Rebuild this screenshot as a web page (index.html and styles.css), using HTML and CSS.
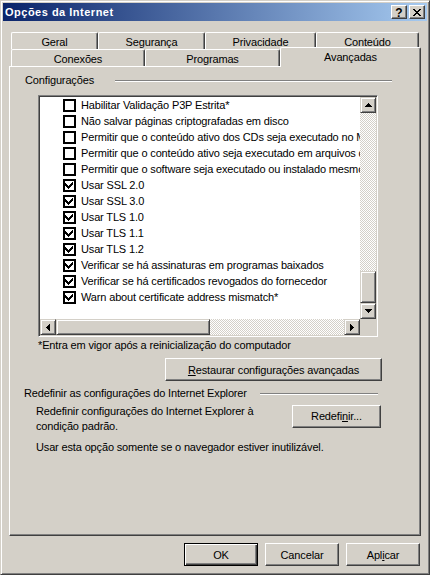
FILE: index.html
```html
<!DOCTYPE html>
<html lang="pt-BR">
<head>
    <meta charset="UTF-8">
    <meta name="viewport" content="width=device-width, initial-scale=1.0">
    <title>Opções da Internet</title>
    <link rel="stylesheet" href="styles.css">
</head>
<body>

<div class="window">
    <div class="titlebar">
        <span class="title">Opções da Internet</span>
        <div class="caption-btns">
            <span class="cap cap-help">?</span>
            <span class="cap">
                <svg width="8" height="7" viewBox="0 0 8 7" shape-rendering="crispEdges"><path d="M0 0h2l2 2.4 2-2.4h2l-3 3.5 3 3.5h-2l-2-2.4-2 2.4h-2l3-3.5z" fill="#000"/></svg>
            </span>
        </div>
    </div>

    <div class="client">
        <div class="tabs">
            <div class="tab-row">
                <div class="tab tab-geral">Geral</div>
                <div class="tab tab-seguranca">Segurança</div>
                <div class="tab tab-privacidade">Privacidade</div>
                <div class="tab tab-conteudo">Conteúdo</div>
            </div>
            <div class="tab-row">
                <div class="tab tab-conexoes">Conexões</div>
                <div class="tab tab-programas">Programas</div>
                <div class="tab tab-avancadas active">Avançadas</div>
            </div>
        </div>

        <div class="panel">
            <div class="group-head head-config">
                <span>Configurações</span>
                <span class="etch"></span>
            </div>

            <div class="listbox">
                <div class="list-rows">
                    <div class="row"><span class="check"></span>Habilitar Validação P3P Estrita*</div>
                    <div class="row"><span class="check"></span>Não salvar páginas criptografadas em disco</div>
                    <div class="row"><span class="check"></span>Permitir que o conteúdo ativo dos CDs seja executado no Meu Computador*</div>
                    <div class="row"><span class="check"></span>Permitir que o conteúdo ativo seja executado em arquivos do Meu Computador*</div>
                    <div class="row"><span class="check"></span>Permitir que o software seja executado ou instalado mesmo que a assinatura seja inválida</div>
                    <div class="row"><span class="check on"></span>Usar SSL 2.0</div>
                    <div class="row"><span class="check on"></span>Usar SSL 3.0</div>
                    <div class="row"><span class="check on"></span>Usar TLS 1.0</div>
                    <div class="row"><span class="check on"></span>Usar TLS 1.1</div>
                    <div class="row"><span class="check on"></span>Usar TLS 1.2</div>
                    <div class="row"><span class="check on"></span>Verificar se há assinaturas em programas baixados</div>
                    <div class="row"><span class="check on"></span>Verificar se há certificados revogados do fornecedor</div>
                    <div class="row"><span class="check on"></span>Warn about certificate address mismatch*</div>
                </div>

                <div class="vscroll">
                    <span class="sb-btn">
                        <svg width="7" height="4" viewBox="0 0 7 4" shape-rendering="crispEdges"><path d="M3 0h1v1h1v1h1v1h1v1h-7v-1h1v-1h1v-1h1z" fill="#000"/></svg>
                    </span>
                    <span class="sb-track"></span>
                    <span class="sb-thumb v"></span>
                    <span class="sb-btn">
                        <svg width="7" height="4" viewBox="0 0 7 4" shape-rendering="crispEdges"><path d="M0 0h7v1h-1v1h-1v1h-1v1h-1v-1h-1v-1h-1v-1h-1z" fill="#000"/></svg>
                    </span>
                </div>

                <div class="hscroll">
                    <span class="sb-btn">
                        <svg width="4" height="7" viewBox="0 0 4 7" shape-rendering="crispEdges"><path d="M3 0h1v7h-1v-1h-1v-1h-1v-1h-1v-1h1v-1h1v-1h1z" fill="#000"/></svg>
                    </span>
                    <span class="sb-thumb h"></span>
                    <span class="sb-track"></span>
                    <span class="sb-btn">
                        <svg width="4" height="7" viewBox="0 0 4 7" shape-rendering="crispEdges"><path d="M0 0h1v1h1v1h1v1h1v1h-1v1h-1v1h-1v1h-1z" fill="#000"/></svg>
                    </span>
                </div>

                <div class="sb-corner"></div>
            </div>

            <p class="note">*Entra em vigor após a reinicialização do computador</p>

            <button class="btn btn-restore"><u>R</u>estaurar configurações avançadas</button>

            <div class="group-head head-reset">
                <span>Redefinir as configurações do Internet Explorer</span>
                <span class="etch"></span>
            </div>

            <div class="reset-row">
                <p class="reset-text">Redefinir configurações do Internet Explorer à<br>condição padrão.</p>
                <button class="btn btn-reset">Redefi<u>n</u>ir...</button>
            </div>

            <p class="hint">Usar esta opção somente se o navegador estiver inutilizável.</p>
        </div>

        <div class="dialog-btns">
            <button class="btn btn-dlg btn-default">OK</button>
            <button class="btn btn-dlg">Cancelar</button>
            <button class="btn btn-dlg">Apl<u>i</u>car</button>
        </div>
    </div>
</div>

</body>
</html>
```

FILE: styles.css
```css
* {
    box-sizing: border-box;
}

html, body {
    margin: 0;
    padding: 0;
}

body {
    background-color: #d4d0c8;
    font-family: "Liberation Sans", Arial, sans-serif;
    font-size: 11px;
    line-height: 14px;
    letter-spacing: -0.15px;
    color: #000;
}

p {
    margin: 0;
}

/* window frame */
.window {
    width: 430px;
    height: 575px;
    display: flex;
    flex-direction: column;
    padding: 2px;
    background-color: #d4d0c8;
    border: 1px solid;
    border-color: #d4d0c8 #404040 #404040 #d4d0c8;
    box-shadow: inset 1px 1px #fff, inset -1px -1px #808080;
}

.titlebar {
    height: 18px;
    flex-shrink: 0;
    display: flex;
    align-items: center;
    justify-content: space-between;
    padding: 0 2px;
    background: linear-gradient(to right, #0a246a, #a6caf0);
}

.title {
    color: #fff;
    font-weight: bold;
    letter-spacing: 0.5px;
}

.caption-btns {
    display: flex;
    gap: 2px;
}

.cap {
    width: 16px;
    height: 14px;
    display: flex;
    align-items: center;
    justify-content: center;
    background-color: #d4d0c8;
    border: 1px solid;
    border-color: #fff #404040 #404040 #fff;
    box-shadow: inset -1px -1px #808080;
}

.cap-help {
    font-weight: bold;
    font-size: 12px;
    letter-spacing: 0;
    padding-top: 1px;
}

/* tabs */
.client {
    flex: 1;
    display: flex;
    flex-direction: column;
}

.tabs {
    margin-top: 11px;
    padding-left: 8px;
}

.tab-row {
    display: flex;
    height: 17px;
    align-items: flex-start;
}

.tab {
    height: 17px;
    padding-top: 2px;
    text-align: center;
    background-color: #d4d0c8;
    border-top: 1px solid #fff;
    border-left: 1px solid #fff;
    border-right: 1px solid #404040;
    border-radius: 2px 2px 0 0;
    box-shadow: inset -1px 0 #808080;
}

.tab-geral { width: 87px; }
.tab-seguranca { width: 107px; }
.tab-privacidade { width: 111px; }
.tab-conteudo { width: 103px; }
.tab-conexoes { width: 134px; }
.tab-programas { width: 135px; }
.tab-avancadas { width: 141px; }

.tab.active {
    position: relative;
    z-index: 1;
    height: 20px;
    margin-top: -2px;
    padding-top: 2px;
}

/* main panel */
.panel {
    height: 470px;
    margin: 0 6px;
    background-color: #d4d0c8;
    border: 1px solid;
    border-color: #fff #404040 #404040 #fff;
    box-shadow: inset -1px -1px #808080;
}

.group-head {
    display: flex;
    align-items: flex-start;
    height: 14px;
    white-space: nowrap;
}

.etch {
    flex: 1;
    height: 2px;
    margin-top: 7px;
    border-top: 1px solid #808080;
    border-bottom: 1px solid #fff;
}

.head-config {
    width: 367px;
    margin: 6px 0 0 15px;
}

.head-config .etch {
    margin-left: 21px;
}

.head-reset {
    width: 354px;
    margin: 5px 0 0 14px;
}

.head-reset .etch {
    margin-left: 13px;
}

/* list with checkboxes */
.listbox {
    width: 340px;
    height: 242px;
    margin: 8px 0 0 28px;
    display: grid;
    grid-template-columns: 320px 16px;
    grid-template-rows: 222px 16px;
    background-color: #fff;
    border: 1px solid;
    border-color: #808080 #fff #fff #808080;
    box-shadow: inset 1px 1px #404040, inset -1px -1px #d4d0c8;
    padding: 1px;
}

.list-rows {
    overflow: hidden;
}

.row {
    height: 16px;
    display: flex;
    align-items: center;
    gap: 5px;
    padding-left: 23px;
    white-space: nowrap;
}

.check {
    width: 13px;
    height: 13px;
    flex-shrink: 0;
    border: 2px solid #000;
    background-color: #fff;
}

.check.on {
    background: #fff url("data:image/svg+xml,%3Csvg xmlns='http://www.w3.org/2000/svg' width='9' height='9' viewBox='0 0 9 9' shape-rendering='crispEdges'%3E%3Cpath d='M7 1h1v3h-1v1h-1v1h-1v1h-1v1h-1v-1h-1v-1h-1v-1h-1v-3h1v1h1v1h1v1h1v-1h1v-1h1v-1h1z' fill='%23000'/%3E%3C/svg%3E") no-repeat 0 0;
}

/* scrollbars */
.vscroll {
    display: flex;
    flex-direction: column;
}

.hscroll {
    display: flex;
}

.sb-btn,
.sb-thumb {
    flex-shrink: 0;
    display: flex;
    align-items: center;
    justify-content: center;
    background-color: #d4d0c8;
    border: 1px solid;
    border-color: #d4d0c8 #404040 #404040 #d4d0c8;
    box-shadow: inset 1px 1px #fff, inset -1px -1px #808080;
}

.sb-btn {
    width: 16px;
    height: 16px;
}

.sb-thumb.v {
    height: 32px;
}

.sb-thumb.h {
    width: 154px;
}

.sb-track {
    flex: 1;
    background: repeating-conic-gradient(#d4d0c8 0 25%, #fff 0 50%) 0 0 / 2px 2px;
}

.sb-corner {
    background-color: #d4d0c8;
}

/* lower part */
.note {
    margin: 1px 0 0 28px;
}

.btn {
    height: 23px;
    padding: 0;
    font: inherit;
    letter-spacing: inherit;
    color: #000;
    background-color: #d4d0c8;
    border: 1px solid;
    border-color: #fff #404040 #404040 #fff;
    box-shadow: inset -1px -1px #808080;
}

.btn-restore {
    display: block;
    width: 217px;
    margin: 6px 0 0 155px;
}

.reset-row {
    display: flex;
    align-items: flex-start;
    margin: 4px 0 0 26px;
    line-height: 15px;
}

.reset-text {
    width: 256px;
}

.btn-reset {
    width: 89px;
    margin-top: 1px;
}

.hint {
    margin: 6px 0 0 26px;
}

.dialog-btns {
    display: flex;
    justify-content: flex-end;
    gap: 7px;
    margin-top: 7px;
    padding-right: 7px;
}

.btn-dlg {
    width: 74px;
}

.btn-default {
    border-color: #000;
    box-shadow: inset 1px 1px #fff, inset -1px -1px #404040, inset -2px -2px #808080;
}
```
